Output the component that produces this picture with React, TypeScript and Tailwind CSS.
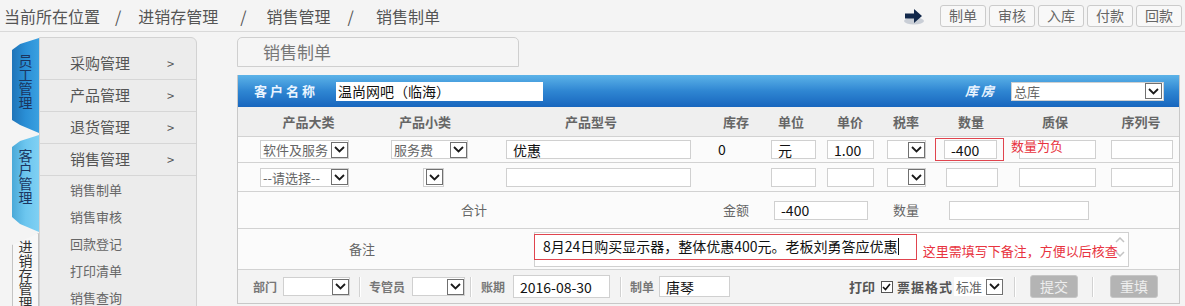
import React from "react";

function Chev() {
  return (
    <span className="flex h-[16px] w-[17px] shrink-0 items-center justify-center border border-[#707070] bg-white">
      <svg width="11" height="7" viewBox="0 0 11 7">
        <polyline points="1,1 5.5,5.5 10,1" fill="none" stroke="#1a1a1a" strokeWidth="1.8" />
      </svg>
    </span>
  );
}

function Sel({ text, className = "" }: { text?: string; className?: string }) {
  return (
    <div className={"flex h-[19px] items-center justify-between border border-[#d0d0d0] bg-white pl-[2px] " + className}>
      <span className="whitespace-nowrap text-[13px] leading-none text-[#666]">{text}</span>
      <Chev />
    </div>
  );
}

function Inp({ v, className = "" }: { v?: string; className?: string }) {
  return (
    <div className={"flex h-[19px] items-center border border-[#d0d0d0] bg-white px-[6px] text-[14px] leading-none text-[#111] " + className}>
      {v}
    </div>
  );
}

function VTab({ text, className }: { text: string; className: string }) {
  return (
    <div className={"flex justify-center " + className}>
      <span className="text-[14px] leading-[16px] [writing-mode:vertical-rl] [text-orientation:upright]">{text}</span>
    </div>
  );
}

function Sep() {
  return <span className="h-[20px] w-[2px] border-l border-[#d2d2d2] border-r border-r-white" />;
}

export default function App() {
  const cols = "grid grid-cols-[141px_92px_240px_50px_60px_58px_54px_76px_92px_80px] items-center";
  const menu = ["采购管理", "产品管理", "退货管理", "销售管理"];
  const subs = ["销售制单", "销售审核", "回款登记", "打印清单", "销售查询"];
  const heads = ["产品大类", "产品小类", "产品型号", "库存", "单位", "单价", "税率", "数量", "质保", "序列号"];

  return (
    <div className="h-[306px] w-[1185px] overflow-hidden bg-[#f4f4f4] font-['Noto_Sans_CJK_SC',sans-serif] text-[#555]">
      {/* top bar */}
      <div className="flex h-[32px] items-center justify-between border-b border-[#d9d9d9]">
        <div className="flex items-center pl-[4px] text-[16px] text-[#555]">
          <span>当前所在位置</span>
          <span className="ml-[15px] mr-[17px]">/</span>
          <span>进销存管理</span>
          <span className="ml-[22px] mr-[20px]">/</span>
          <span>销售管理</span>
          <span className="ml-[17px] mr-[22px]">/</span>
          <span>销售制单</span>
        </div>
        <div className="flex items-center pr-[3px]">
          <svg width="22" height="18" viewBox="0 0 22 18" className="mr-[12px]">
            <ellipse cx="11" cy="14" rx="10" ry="3.5" fill="#c9ced6" />
            <path d="M2 6.5 H11 V2 L19 9 L11 16 V11.5 H2 Z" fill="#13294b" />
          </svg>
          {["制单", "审核", "入库", "付款", "回款"].map((b) => (
            <span
              key={b}
              className="ml-[3px] flex h-[22px] w-[46px] items-center justify-center rounded-[3px] border border-[#cbcbcb] bg-[#f8f8f8] text-[14px] text-[#666]"
            >
              {b}
            </span>
          ))}
        </div>
      </div>

      <div className="flex">
        {/* tabs */}
        <div className="ml-[12px] flex w-[27px] flex-col">
          <VTab
            text="员工管理"
            className="mt-[6px] h-[95px] bg-gradient-to-r from-[#1f74b8] via-[#2a8fd6] to-[#3aa0e0] pt-[16px] text-[#1b3560] [clip-path:polygon(0_12px,30%_6px,100%_0,100%_100%,30%_calc(100%-8px),0_calc(100%-13px))]"
          />
          <VTab
            text="客户管理"
            className="mt-[2px] h-[97px] bg-gradient-to-r from-[#4aa9d8] via-[#6cc6ef] to-[#7fd0f3] pt-[14px] text-[#1b3560] [clip-path:polygon(0_12px,30%_6px,100%_0,100%_100%,30%_calc(100%-8px),0_calc(100%-15px))]"
          />
          <VTab
            text="进销存管理"
            className="mt-[1px] h-[80px] overflow-hidden border border-[#c4c4c4] bg-[#f7f7f7] pt-[6px] text-[#333] [clip-path:polygon(0_12px,100%_0,100%_100%,0_100%)]"
          />
        </div>

        {/* menu */}
        <div className="mt-[5px] h-[280px] w-[158px] rounded-tr-[6px] border border-[#d2d2d2] bg-[#ececec] pt-[10px]">
          {menu.map((m) => (
            <div key={m} className="flex h-[32px] items-center border-b border-[#d6d6d6] pl-[30px] text-[15px] text-[#555]">
              <span className="w-[97px]">{m}</span>
              <span className="text-[13px]">&gt;</span>
            </div>
          ))}
          {subs.map((s) => (
            <div key={s} className="flex h-[27px] items-center pl-[30px] text-[13px] text-[#666]">
              {s}
            </div>
          ))}
        </div>

        {/* main */}
        <div className="ml-[40px] w-[943px]">
          <div className="mt-[5px] flex h-[30px] w-[282px] items-center rounded-t-[5px] border border-[#cfcfcf] bg-[#f5f5f5] pl-[25px] text-[17px] text-[#777]">
            销售制单
          </div>

          <div className="mt-[8px] border-x border-b border-[#c8c8c8]">
            {/* header bar */}
            <div className="flex h-[32px] items-center bg-gradient-to-b from-[#5cb3e8] via-[#2f86d2] to-[#1866be] pl-[16px] pr-[15px]">
              <span className="w-[82px] text-[13px] font-bold tracking-[3px] text-[#eaf4ff]">客户名称</span>
              <div className="flex h-[19px] w-[207px] items-center bg-white px-[2px] text-[14px] text-[#111]">温尚网吧（临海）</div>
              <span className="ml-auto mr-[14px] text-[13px] font-bold italic tracking-[3px] text-[#eaf4ff]">库房</span>
              <Sel text="总库" className="w-[153px] border-[#8a8a8a] pr-[1px]" />
            </div>

            {/* column heads */}
            <div className={cols + " h-[30px] border-b border-[#d2d2d2] bg-[#efefef]"}>
              {heads.map((h) => (
                <span key={h} className="text-center text-[13px] font-bold text-[#666]">
                  {h}
                </span>
              ))}
            </div>

            {/* row 1 */}
            <div className={cols + " h-[26px] border-b border-[#d2d2d2] bg-[#fbfbfb]"}>
              <Sel text="软件及服务" className="ml-[22px] w-[89px]" />
              <Sel text="服务费" className="ml-[12px] w-[77px]" />
              <Inp v="优惠" className="ml-[35px] w-[185px] text-[13px]" />
              <span className="pl-[7px] text-[14px] text-[#111]">0</span>
              <Inp v="元" className="ml-[10px] w-[45px]" />
              <Inp v="1.00" className="ml-[6px] w-[47px]" />
              <Sel className="ml-[8px] w-[39px]" />
              <div className="ml-[2px] flex h-[23px] w-[69px] items-center border border-[#e0444e]">
                <Inp v="-400" className="ml-[8px] w-[53px]" />
              </div>
              <div className="relative">
                <Inp className="ml-[10px] w-[77px]" />
                <span className="absolute left-[2px] top-[-4px] text-[13px] text-[#e8343f]">数量为负</span>
              </div>
              <Inp className="ml-[10px] w-[62px]" />
            </div>

            {/* row 2 */}
            <div className={cols + " h-[29px] border-b border-[#d2d2d2] bg-[#fbfbfb]"}>
              <Sel text="--请选择--" className="ml-[22px] w-[89px]" />
              <Sel className="ml-[44px] w-[21px]" />
              <Inp className="ml-[35px] w-[185px]" />
              <span />
              <Inp className="ml-[10px] w-[45px]" />
              <Inp className="ml-[6px] w-[47px]" />
              <Sel className="ml-[8px] w-[39px]" />
              <Inp className="ml-[13px] w-[52px]" />
              <Inp className="ml-[10px] w-[77px]" />
              <Inp className="ml-[10px] w-[62px]" />
            </div>

            {/* sum */}
            <div className="flex h-[37px] items-center border-b border-[#d2d2d2] bg-[#fbfbfb] text-[13px] text-[#666]">
              <span className="w-[485px] pl-[223px]">合计</span>
              <span className="w-[51px]">金额</span>
              <Inp v="-400" className="w-[94px]" />
              <span className="ml-[25px] w-[56px]">数量</span>
              <Inp className="w-[140px]" />
            </div>

            {/* remark */}
            <div className="flex h-[41px] items-center border-b border-[#d2d2d2] bg-[#fbfbfb]">
              <span className="w-[296px] pl-[111px] text-[13px] text-[#666]">备注</span>
              <div className="relative flex h-[35px] w-[595px] items-start border border-[#d0d0d0] bg-white pt-[3px]">
                <span className="ml-[8px] text-[14px] text-[#111]">8月24日购买显示器，整体优惠400元。老板刘勇答应优惠</span>
                <span className="mt-[2px] h-[17px] w-[1px] bg-[#111]" />
                <span className="ml-[24px] mt-[5px] text-[13px] text-[#e8343f]">这里需填写下备注，方便以后核查</span>
                <div className="absolute left-[-1px] top-[1px] h-[26px] w-[383px] border border-[#e0444e]" />
                <div className="absolute right-[3px] top-[4px] flex flex-col gap-[8px]">
                  <svg width="10" height="6" viewBox="0 0 10 6">
                    <polyline points="1,5 5,1 9,5" fill="none" stroke="#c4c4c4" strokeWidth="1.5" />
                  </svg>
                  <svg width="10" height="6" viewBox="0 0 10 6">
                    <polyline points="1,1 5,5 9,1" fill="none" stroke="#c4c4c4" strokeWidth="1.5" />
                  </svg>
                </div>
              </div>
            </div>

            {/* bottom */}
            <div className="flex h-[33px] items-center bg-[#f3f3f3] pl-[15px] text-[12px] font-bold text-[#777]">
              <span className="w-[30px]">部门</span>
              <Sel className="w-[67px] border-[#c4c4c4]" />
              <span className="ml-[9px] flex"><Sep /></span>
              <span className="ml-[8px] w-[43px]">专管员</span>
              <Sel className="w-[53px] border-[#c4c4c4]" />
              <span className="ml-[5px] flex"><Sep /></span>
              <span className="ml-[9px] w-[32px]">账期</span>
              <Inp v="2016-08-30" className="h-[23px] w-[97px] font-normal" />
              <span className="ml-[10px] flex"><Sep /></span>
              <span className="ml-[8px] w-[29px]">制单</span>
              <Inp v="唐琴" className="h-[21px] w-[71px] font-normal" />
              <span className="ml-auto text-[13px] text-[#555]">打印</span>
              <span className="ml-[6px] flex h-[12px] w-[12px] items-center justify-center border border-[#555] bg-white">
                <svg width="9" height="8" viewBox="0 0 9 8">
                  <polyline points="1,4 3.5,6.5 8,1" fill="none" stroke="#111" strokeWidth="1.6" />
                </svg>
              </span>
              <span className="ml-[4px] text-[13px] tracking-[1px] text-[#555]">票据格式</span>
              <Sel text="标准" className="ml-[1px] w-[49px] border-0 bg-[#f3f3f3] font-normal" />
              <span className="ml-[11px] flex"><Sep /></span>
              <span className="ml-[14px] flex h-[23px] w-[48px] items-center justify-center rounded-[3px] border border-[#c6c6c6] bg-[#b4b4b4] text-[14px] font-normal text-[#eee]">
                提交
              </span>
              <span className="ml-[14px] flex"><Sep /></span>
              <span className="ml-[16px] mr-[21px] flex h-[23px] w-[48px] items-center justify-center rounded-[3px] border border-[#c6c6c6] bg-[#b4b4b4] text-[14px] font-normal text-[#eee]">
                重填
              </span>
            </div>
          </div>
        </div>
      </div>
    </div>
  );
}
